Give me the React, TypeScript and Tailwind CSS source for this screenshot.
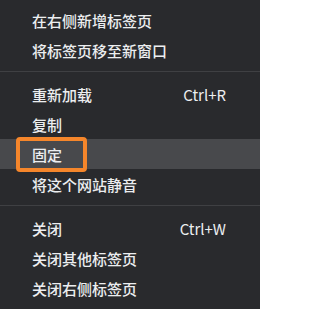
import React from "react";

type Item = { label: string; accel?: string; active?: boolean } | "sep";

const items: Item[] = [
  { label: "在右侧新增标签页" },
  { label: "将标签页移至新窗口" },
  "sep",
  { label: "重新加载", accel: "Ctrl+R" },
  { label: "复制" },
  { label: "固定", active: true },
  { label: "将这个网站静音" },
  "sep",
  { label: "关闭", accel: "Ctrl+W" },
  { label: "关闭其他标签页" },
  { label: "关闭右侧标签页" },
];

export default function App() {
  return (
    <div
      className="w-[260px] h-[309px] bg-[#292a2d] text-[#eceef0] py-[5px] overflow-hidden"
      style={{ fontFamily: '"Noto Sans CJK SC", "Noto Sans", sans-serif' }}
    >
      {items.map((it, i) =>
        it === "sep" ? (
          <div key={i} className="mt-[6px] mb-[7px] h-px bg-[#3f4043]" />
        ) : (
          <div
            key={i}
            className={
              "relative flex items-center justify-between h-[30px] pl-[32px] pr-[34px] text-[15px] leading-none font-medium " +
              (it.active ? "bg-[#48494c]" : "")
            }
          >
            <span>{it.label}</span>
            {it.accel && <span className="font-normal">{it.accel}</span>}
            {it.active && (
              <div className="absolute left-[16px] top-[-2px] w-[71px] h-[35px] border-4 border-[#f5862b] rounded-[4px]" />
            )}
          </div>
        )
      )}
    </div>
  );
}
